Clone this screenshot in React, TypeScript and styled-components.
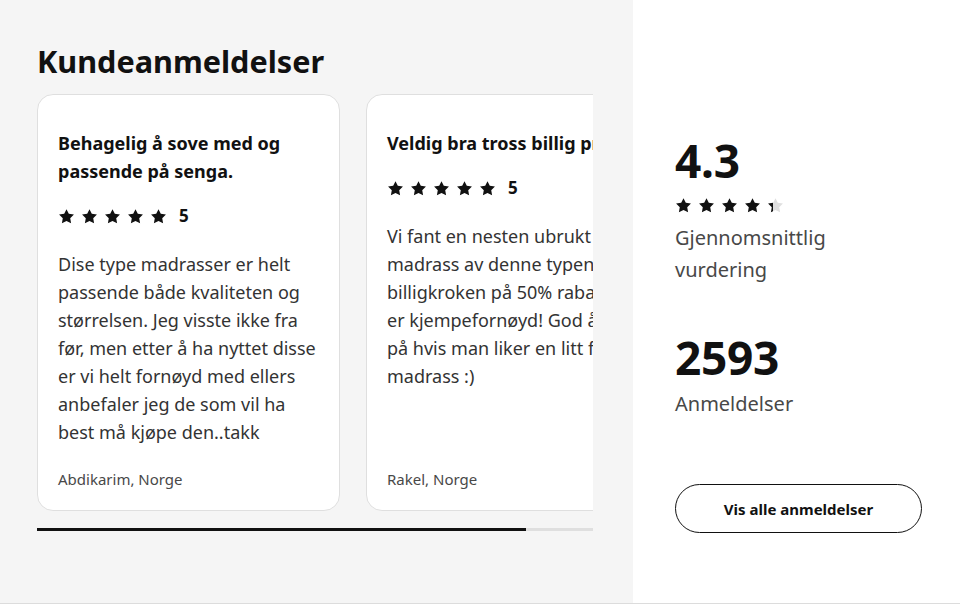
import React from 'react';
import styled, {createGlobalStyle} from 'styled-components';

const GlobalStyle = createGlobalStyle`
    * { box-sizing: border-box; }
    body {
        margin: 0;
        font-family: 'Noto Sans', 'Open Sans', sans-serif;
        color: #111;
        background: #fff;
    }
`;

type Review = {
    title: string;
    rating: number;
    text: string;
    author: string;
};

const reviews: Review[] = [
    {
        title: 'Behagelig å sove med og passende på senga.',
        rating: 5,
        text: 'Dise type madrasser er helt passende både kvaliteten og størrelsen. Jeg visste ikke fra før, men etter å ha nyttet disse er vi helt fornøyd med ellers anbefaler jeg de som vil ha best må kjøpe den..takk',
        author: 'Abdikarim, Norge',
    },
    {
        title: 'Veldig bra tross billig pris',
        rating: 5,
        text: 'Vi fant en nesten ubrukt madrass av denne typen i billigkroken på 50% rabatt og er kjempefornøyd! God å sove på hvis man liker en litt fast madrass :)',
        author: 'Rakel, Norge',
    },
    {
        title: 'God madrass',
        rating: 4,
        text: 'Passer fint til gjesterommet.',
        author: 'Ola, Norge',
    },
];

const STAR = 'M12 1.6l3.25 6.6 7.25 1.05-5.25 5.12 1.24 7.23L12 18.18l-6.49 3.42 1.24-7.23L1.5 9.25l7.25-1.05z';

const Star: React.FunctionComponent<{fill: number; id: string}> = ({fill, id}) => (
    <svg width="17" height="17" viewBox="0 0 24 24">
        <defs>
            <linearGradient id={id}>
                <stop offset={fill} stopColor="#111"/>
                <stop offset={fill} stopColor="#dfdfdf"/>
            </linearGradient>
        </defs>
        <path d={STAR} fill={`url(#${id})`}/>
    </svg>
);

const Stars: React.FunctionComponent<{value: number; name: string}> = ({value, name}) => (
    <StarRow>
        {[0, 1, 2, 3, 4].map((i) => (
            <Star key={i} id={`${name}-${i}`} fill={Math.max(0, Math.min(1, value - i))}/>
        ))}
    </StarRow>
);

const App: React.FunctionComponent = () => {
    const visible = 0.88;
    return (
        <Page>
            <GlobalStyle/>
            <Reviews>
                <Heading>Kundeanmeldelser</Heading>
                <Scroller>
                    {reviews.map((r, i) => (
                        <Card key={i}>
                            <CardTitle>{r.title}</CardTitle>
                            <RatingLine>
                                <Stars value={r.rating} name={`card${i}`}/>
                                <span>{r.rating}</span>
                            </RatingLine>
                            <CardText>{r.text}</CardText>
                            <Author>{r.author}</Author>
                        </Card>
                    ))}
                </Scroller>
                <Track>
                    <Thumb style={{width: `${visible * 100}%`}}/>
                </Track>
            </Reviews>
            <Summary>
                <BigNumber>4.3</BigNumber>
                <Stars value={4.3} name="avg"/>
                <Label $gap={8}>Gjennomsnittlig<br/>vurdering</Label>
                <BigNumber $space>2593</BigNumber>
                <Label $gap={4}>Anmeldelser</Label>
                <Button>Vis alle anmeldelser</Button>
            </Summary>
        </Page>
    );
}

const Page = styled.div`
    display: flex;
    height: 604px;
    border-bottom: 1px solid #dcdcdc;
`;

const Reviews = styled.section`
    width: 633px;
    flex-shrink: 0;
    background: #f5f5f5;
    padding: 40px 40px 0 37px;
`;

const Heading = styled.h2`
    margin: 0 0 12px;
    font-size: 30.6px;
    line-height: 42px;
    font-weight: 700;
`;

const Scroller = styled.div`
    display: flex;
    gap: 26px;
    width: 556px;
    overflow: hidden;
`;

const Card = styled.article`
    flex: 0 0 303px;
    height: 417px;
    display: flex;
    flex-direction: column;
    background: #fff;
    border: 1px solid #dfdfdf;
    border-radius: 16px;
    padding: 34px 20px 20px;
`;

const CardTitle = styled.h3`
    margin: 0;
    font-size: 18px;
    line-height: 28px;
    font-weight: 700;
`;

const RatingLine = styled.div`
    display: flex;
    align-items: center;
    gap: 12px;
    margin-top: 19px;
    font-size: 17px;
    font-weight: 700;
    line-height: 24px;
`;

const StarRow = styled.div`
    display: flex;
    gap: 6px;
    svg { display: block; }
`;

const CardText = styled.p`
    margin: 22px 0 0;
    font-size: 18px;
    line-height: 28px;
    color: #333;
`;

const Author = styled.div`
    margin-top: auto;
    font-size: 15px;
    line-height: 22px;
    color: #484848;
`;

const Track = styled.div`
    width: 556px;
    height: 3px;
    margin-top: 17px;
    background: #dfdfdf;
`;

const Thumb = styled.div`
    height: 100%;
    background: #111;
`;

const Summary = styled.section`
    flex: 1;
    padding: 133px 0 0 42px;
    background: #fff;
    display: flex;
    flex-direction: column;
    align-items: flex-start;
`;

const BigNumber = styled.div<{$space?: boolean}>`
    margin-top: ${(p) => (p.$space ? '44px' : '0')};
    margin-bottom: ${(p) => (p.$space ? '0' : '10px')};
    font-size: 46px;
    line-height: 54px;
    font-weight: 700;
    letter-spacing: -0.3px;
`;

const Label = styled.div<{$gap: number}>`
    margin-top: ${(p) => p.$gap}px;
    font-size: 20px;
    line-height: 32px;
    color: #484848;
`;

const Button = styled.button`
    margin-top: 64px;
    width: 247px;
    height: 49px;
    border: 1.5px solid #111;
    border-radius: 25px;
    background: #fff;
    font-family: inherit;
    font-size: 15px;
    font-weight: 700;
    color: #111;
`;

export default App;
